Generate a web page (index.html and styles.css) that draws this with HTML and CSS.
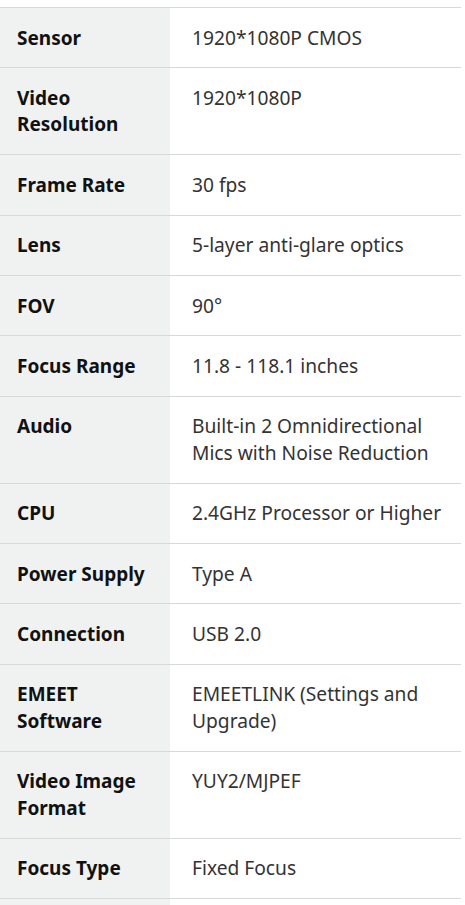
FILE: index.html
```html
<!DOCTYPE html>
<html>
<head>
<meta charset="utf-8">
<link rel="stylesheet" href="styles.css">
</head>
<body>
<table class="specs">
<tbody>
<tr><th>Sensor</th><td>1920*1080P CMOS</td></tr>
<tr><th>Video Resolution</th><td>1920*1080P</td></tr>
<tr><th>Frame Rate</th><td>30 fps</td></tr>
<tr><th>Lens</th><td>5-layer anti-glare optics</td></tr>
<tr><th>FOV</th><td>90°</td></tr>
<tr><th>Focus Range</th><td>11.8 - 118.1 inches</td></tr>
<tr><th>Audio</th><td>Built-in 2 Omnidirectional Mics with Noise Reduction</td></tr>
<tr><th>CPU</th><td>2.4GHz Processor or Higher</td></tr>
<tr><th>Power Supply</th><td>Type A</td></tr>
<tr><th>Connection</th><td>USB 2.0</td></tr>
<tr><th>EMEET Software</th><td>EMEETLINK (Settings and Upgrade)</td></tr>
<tr><th>Video Image Format</th><td>YUY2/MJPEF</td></tr>
<tr><th>Focus Type</th><td>Fixed Focus</td></tr>
<tr class="tail"><th></th><td></td></tr>
</tbody>
</table>
</body>
</html>
```
FILE: styles.css
```css
html, body {
  margin: 0;
  padding: 0;
  background: #fff;
}
body {
  padding-top: 7px;
  font-family: "Noto Sans", "Open Sans", sans-serif;
  font-size: 19px;
  line-height: 26.4px;
}
.specs {
  width: 461px;
  border-collapse: collapse;
  border-top: 1px solid #d5d9d9;
}
.specs th, .specs td {
  padding: 16.5px 0;
  border-bottom: 1px solid #d5d9d9;
  vertical-align: top;
  text-align: left;
}
.specs th {
  width: 136px;
  padding-left: 17px;
  padding-right: 17px;
  background: #f0f2f2;
  color: #111;
  font-weight: 700;
}
.specs td {
  padding-left: 22px;
  padding-right: 8px;
  color: #333;
  font-size: 19.2px;
  font-weight: 400;
}
.specs .tail th, .specs .tail td {
  border-bottom: none;
  padding: 0;
  height: 10px;
}
```
